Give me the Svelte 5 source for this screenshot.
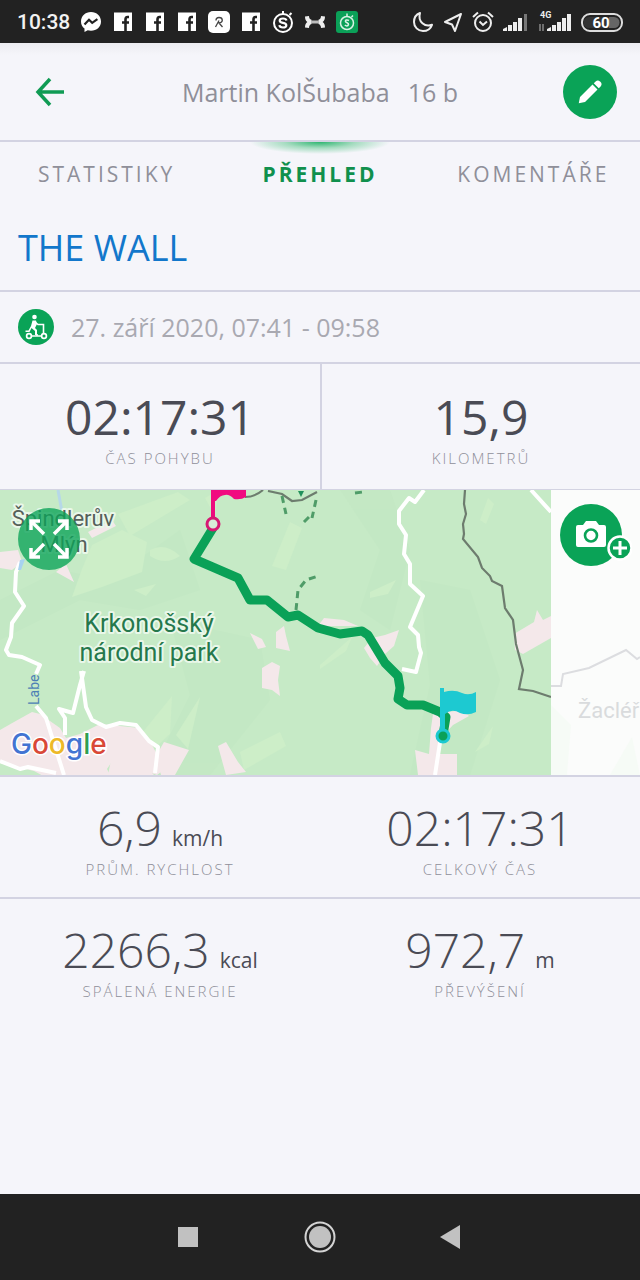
<script>
  const tabs = [
    { label: 'Statistiky', active: false },
    { label: 'Přehled', active: true },
    { label: 'Komentáře', active: false }
  ];
  const primary = [
    { value: '02:17:31', unit: '', label: 'Čas pohybu' },
    { value: '15,9', unit: '', label: 'Kilometrů' }
  ];
  const secondary = [
    [
      { value: '6,9', unit: 'km/h', label: 'Prům. rychlost' },
      { value: '02:17:31', unit: '', label: 'Celkový čas' }
    ],
    [
      { value: '2266,3', unit: 'kcal', label: 'Spálená energie' },
      { value: '972,7', unit: 'm', label: 'Převýšení' }
    ]
  ];
  const notifications = ['messenger', 'fb', 'fb', 'fb', 'relive', 'fb', 'watch', 'ua', 'app'];
</script>

{#snippet stat(item)}
  <div class="stat">
    <dt>{item.label}</dt>
    <dd>{item.value}{#if item.unit}<span class="unit">{item.unit}</span>{/if}</dd>
  </div>
{/snippet}

<div class="screen">
  <div class="status">
    <time>10:38</time>
    <div class="notes">
      {#each notifications as kind}
        <svg viewBox="0 0 22 22" width="22" height="22" aria-hidden="true">
          {#if kind === 'messenger'}
            <path d="M11 1C5.300 1 1 5 1 10.400c0 3 1.300 5.400 3.500 7.100V21l3.200-1.800c1 .3 2.100.5 3.300.5 5.700 0 10-4 10-9.300S16.700 1 11 1z" fill="#fff" />
            <path d="M4.500 13.500l4.500-4.700 3.200 3 5.200-3.600" fill="none" stroke="#222" stroke-width="2.200" />
          {:else if kind === 'fb'}
            <rect x="2" y="1.500" width="18" height="18.500" fill="#fff" />
            <path d="M17 6h-1.500Q13.500 6 13.500 8.500V20M10 11.500H17" fill="none" stroke="#222" stroke-width="2.600" />
          {:else if kind === 'relive'}
            <rect x="0" y="0" width="22" height="22" rx="5" fill="#fff" />
            <path d="M8 9.500C8 7.500 9.500 6.500 11 6.500c2 0 3.300 1.200 3.300 2.800 0 1.700-1.500 2.500-3.300 2.700l3.500 4M11 9.500l-3.500 6.500" fill="none" stroke="#444" stroke-width="1.300" />
          {:else if kind === 'watch'}
            <circle cx="11" cy="12" r="9" fill="none" stroke="#fff" stroke-width="2" />
            <path d="M11 3V0M17.500 4l2-2" stroke="#fff" stroke-width="2" />
            <path d="M14.500 9.500c-.4-1.400-1.600-2-3.500-2s-3.300.7-3.300 2.200c0 3.100 6.600 1.300 6.600 4.500 0 1.600-1.400 2.300-3.400 2.300-2.100 0-3.300-.8-3.500-2.300" fill="none" stroke="#fff" stroke-width="2.200" />
          {:else if kind === 'ua'}
            <path d="M1 5.500l4-.5c0 2 .8 3.200 2.500 3.800V13C5.800 13.600 5 14.800 5 17l-4-.5c0-2.400.7-4.200 2.300-5.500C1.700 9.700 1 7.900 1 5.500zM21 5.500L17 5c0 2-.8 3.200-2.500 3.800V13c1.700.6 2.500 1.800 2.500 4l4-.5c0-2.400-.7-4.200-2.300-5.500 1.600-1.300 2.300-3.100 2.300-5.500z" fill="#eee" />
            <path d="M7 11h8" stroke="#bbb" stroke-width="3" />
          {:else}
            <rect width="22" height="22" rx="3" fill="#0ba058" />
            <circle cx="11" cy="12" r="6.500" fill="none" stroke="#d9f2e5" stroke-width="1.500" />
            <path d="M11 5V2.500M15.500 6l1.500-1.500M13 9.500c-2-1-4-.5-3.500 1s3.500 1 3 3-2.500 1.500-3.700.7" fill="none" stroke="#d9f2e5" stroke-width="1.500" />
          {/if}
        </svg>
      {/each}
    </div>
    <div class="system">
      <svg viewBox="0 0 22 22" width="22" height="22" aria-hidden="true">
        <path d="M8 2C4 3.500 2 7 2 11c0 5 4 9 9 9 4.300 0 7.700-2.500 9-6.200C13 16.500 5.500 11 8 2z" fill="none" stroke="#eee" stroke-width="2" stroke-linejoin="round" />
      </svg>
      <svg viewBox="0 0 20 22" width="20" height="22" aria-hidden="true">
        <path d="M18 3L2 11l7 2.500L12 20z" fill="none" stroke="#eee" stroke-width="2" stroke-linejoin="round" />
      </svg>
      <svg viewBox="0 0 22 22" width="22" height="22" aria-hidden="true">
        <circle cx="11" cy="12" r="8" fill="none" stroke="#eee" stroke-width="2" />
        <path d="M7.500 10.500l3.500 3.500 4-3.500M1 6l5-4.500M21 6l-5-4.500" fill="none" stroke="#eee" stroke-width="2" />
      </svg>
      <svg viewBox="0 0 26 22" width="26" height="22" aria-hidden="true">
        <path d="M0 20v-2l4-2v4zM5 20v-6h4v6zM10 20v-9h4v9zM15 20V7h4v13z" fill="#eee" />
        <path d="M21 20V3h3v17z" fill="#777" />
      </svg>
      <svg viewBox="0 0 34 22" width="34" height="22" aria-hidden="true">
        <text x="2" y="7" class="net">4G</text>
        <path d="M9 20v-2l4-2v4zM14 20v-6h4v6zM19 20v-9h4v9zM24 20V7h4v13zM29 20V3h4v17z" fill="#eee" />
        <path d="M2 20v-7M5 13v7" stroke="#888" stroke-width="1.500" />
      </svg>
      <svg viewBox="0 0 42 22" width="42" height="22" aria-hidden="true">
        <rect x="1" y="3" width="40" height="17" rx="8" fill="none" stroke="#ddd" stroke-width="2" />
        <path d="M8 6h20v11H8a5 5 0 0 1 0-11z" fill="#333" />
        <path d="M28 6h5a5.500 5.500 0 0 1 0 11h-5z" fill="#666" />
        <text x="20" y="17" text-anchor="middle" class="charge">60</text>
      </svg>
    </div>
  </div>

  <header>
    <button class="back" aria-label="Zpět">
      <svg viewBox="0 0 30 36" width="30" height="36" aria-hidden="true">
        <path d="M16 5L4 18l12 13M4 18h26" fill="none" stroke="#109b54" stroke-width="3.500" />
      </svg>
    </button>
    <h1>Martin KolŠubaba<span>16 b</span></h1>
    <button class="edit" aria-label="Upravit">
      <svg viewBox="0 0 24 24" width="30" height="30" aria-hidden="true">
        <path d="M3 21l1-5L14 6l4 4L8 20zM15 5l1.500-1.500c1-1 2.500-1 3.500 0l.5.5c1 1 1 2.500 0 3.500L19 9z" fill="#fff" />
      </svg>
    </button>
  </header>

  <nav class="tabs">
    {#each tabs as tab}
      <a href="#{tab.label}" class:active={tab.active}>{tab.label}</a>
    {/each}
  </nav>

  <main>
    <h2>THE WALL</h2>
    <div class="when">
      <svg viewBox="0 0 36 36" width="36" height="36" aria-hidden="true">
        <circle cx="18" cy="18" r="18" fill="#0aa357" />
        <circle cx="16.500" cy="8" r="2.300" fill="#fff" />
        <path d="M14.500 11.500h3.500l1 3.500-2 4 2 2v5h-2v-4l-3.500-3-2 4H7.500v-1.500h3L13 17z" fill="#fff" />
        <path d="M17 13l3 2.500h5.500V25M14 27h9M19 25v2" fill="none" stroke="#fff" stroke-width="1.600" />
        <circle cx="11" cy="27" r="2.400" fill="none" stroke="#fff" stroke-width="1.700" />
        <circle cx="26" cy="27" r="2.400" fill="none" stroke="#fff" stroke-width="1.700" />
      </svg>
      <span>27. září 2020, 07:41 - 09:58</span>
    </div>

    <dl class="row primary">
      {#each primary as item}{@render stat(item)}{/each}
    </dl>

    <section class="map" aria-label="Mapa trasy">
      <svg class="canvas" viewBox="0 0 640 285" preserveAspectRatio="xMidYMid slice">
        <rect width="640" height="285" fill="#c6eac6" />
        <g fill="#bfe6c1" opacity=".35">
          <path d="M0 110l60-30 50 10 70-50 20 60-60 20-60-10-80 40z" />
          <path d="M340 0h50l20 60-20 80-30-20 20-60z" />
          <path d="M420 90l50 10 30 90-30 95h-60l20-90z" />
          <path d="M170 130l90 20 10 60-60 75h-60l40-80z" />
        </g>
        <g fill="#cdeec8">
          <path d="M92 55l30-15 25 12-5 30-40 15-30 10 10-28z" />
          <path d="M150 60q15-8 30 6-15 10-30 0z" />
          <path d="M118 24l60-22 12 8-60 36z" />
          <path d="M272 76l18-44 12 6-16 42z" />
          <path d="M134 100l22-6-10 12z" />
          <path d="M138 248l34-42-2 38-36 34z" />
          <path d="M176 245l24-38-12 52z" />
          <path d="M480 30l8-22 6 6-8 20z" />
          <path d="M370 102l26-12-8 14-18 4z" />
          <path d="M320 175l32-28-6 14-26 18z" />
          <path d="M475 262l18-26-4 18z" />
          <path d="M240 262l40-20 6 14-42 24z" />
          <path d="M205 8l14-8-4 26z" />
        </g>
        <g fill="#f4e8ea">
          <path d="M0 62l18-2 4 12-10 8-12-2z" />
          <path d="M88 42l24-12 4 6-24 12zM56 82l18 10-8-18z" />
          <path d="M0 240l14-8 18-10 8 2 20 14 6 10 14-4 20-10 40 4 12 17 13 24-8 6-18-6-12-10-12-2-8 12 8 16H60l-26-14-34-8z" />
          <path d="M108 285l4-20 14-4 14 10 14 14z" />
          <path d="M156 266l8-14 25 8-14 25h-14zM218 256l8-4 12 20 8 10-20 3z" />
          <path d="M250 143l12 6 4 8-8 2zM276 142l8-6 2 10 4 15-14-3zM262 178l10-6 8 4-2 14 2 16-8-6-10-2z" />
          <path d="M338 136h-20l6-8 20 2 14 6zM364 158l8-10 13-3 14-5-5 16-9 8-8 12-7-8z" />
          <path d="M514 144l20-12 3-12 6 10 8-4v22l-28 16-8-4z" />
          <path d="M433 224l30-4 6 6-16 9-14 15-2 14 20 0v21h-39l-3-25 14 4 2-26z" />
        </g>
        <g fill="none" stroke="#fff" stroke-width="4" stroke-linejoin="round">
          <path d="M20 72l-4 10-1 20 9 14-12 17-1 14-5 13 3 5 13 2 18 8-4 9M36 216l10 12 18 57M0 271l20 8 8-2 28 6" />
          <path d="M84 181l-4 14-4 16-3 12-14-4 6 9v17M81 181l5 36 6 13 14 7 14-4 16 2 13 16 9 6-3 26" />
          <path d="M424 0l-9 12-6-4-10 13 0 13 7 11-2 19 6 10v20l13 12-13 31 8 8 1 12 2 6-5 19-14-3" />
          <path d="M531 0l20 22M441 246l-6 39" />
        </g>
        <path d="M18 80l2-10 5-1-4 11z" fill="#a8d2ef" />
        <path d="M58 0l4 22" stroke="#b6d8e8" stroke-width="3" />
        <g fill="none" stroke="#6d7c6e" stroke-width="2.200">
          <path d="M245 7q10 0 18-7M268 1l14 3 10 7 10-1 15-8" />
          <path d="M465 0l-1 14 2 10-3 10 1 10-1 5 15 18 4 11 8 8 2 5 10 5 3 22 8 12 3 24 7 26-4 19 14 2 18 6" />
        </g>
        <g fill="none" stroke="#4f9c68" stroke-width="3" stroke-dasharray="7 5">
          <path d="M296 120l2-20 8-10 12-4M282 6l4 18M316 10l-4 18M304 32l8-8M355 3l8-1" />
        </g>
        <path d="M298 1h6l-3 6z" fill="#22915b" />

        <rect x="551" width="89" height="285" fill="#fbfcfb" />
        <path d="M610 285l22-38 8 38zM551 215l20 20-4 50h-16z" fill="#f6fbf6" />
        <path d="M551 196h10l2-12 26-6 37-18 11 9 3-2" fill="none" stroke="#dcdde0" stroke-width="2" />

        <g class="label town">
          <text x="63" y="36" text-anchor="middle">Špindlerův</text>
          <text x="64" y="62" text-anchor="middle">Mlýn</text>
        </g>
        <g class="label park">
          <text x="149" y="142" text-anchor="middle">Krkonošský</text>
          <text x="149" y="171" text-anchor="middle">národní park</text>
        </g>
        <text class="river" transform="translate(39 215) rotate(-90)">Labe</text>
        <text class="faded" x="578" y="228">Žacléř</text>
        <text class="google" x="11" y="264"><tspan fill="#4274d2">G</tspan><tspan fill="#d94837">o</tspan><tspan fill="#edb928">o</tspan><tspan fill="#4274d2">g</tspan><tspan fill="#2f9f51">l</tspan><tspan fill="#d94837">e</tspan></text>

        <path d="M213 38l-19 31 44 19 12 22h17l21 17 10-2 20 13 22 6 22-3 6 4 17 28 13 13 2 12-2 11 9 6h16l17 7 6 5-3 18" fill="none" stroke="#0aa157" stroke-width="9" stroke-linejoin="round" />
        <path d="M213 28V0" stroke="#ed0b7e" stroke-width="4" />
        <path d="M211 0h35v7q-5 3-12 2-5-5-9-4-5 0-9 6h-5z" fill="#f10a80" />
        <circle cx="213" cy="34" r="6" fill="#d8edd8" stroke="#d61973" stroke-width="3" />
        <path d="M440 198h4v4q10-3 18 1 7 3 14-1v20q-8 4-16 1-8-5-15 1v20h-5z" fill="#1dc9d1" />
        <circle cx="443" cy="246" r="6" fill="#0aa157" stroke="#1dc9d1" stroke-width="3" />
      </svg>
      <button class="expand" aria-label="Zvětšit mapu">
        <svg viewBox="0 0 40 40" width="40" height="40" aria-hidden="true">
          <path d="M15 15L3 3M25 15L37 3M15 25L3 37M25 25l12 12M2 11V2h9M29 2h9v9M2 29v9h9M29 38h9v-9" fill="none" stroke="#fff" stroke-width="3.500" />
        </svg>
      </button>
      <button class="photo" aria-label="Přidat fotku">
        <svg viewBox="0 0 72 62" width="72" height="62" aria-hidden="true">
          <circle cx="31" cy="31" r="31" fill="#0aa357" />
          <path d="M18 21h5l3-4h10l3 4h5q2 0 2 2v18q0 2-2 2H18q-2 0-2-2V23q0-2 2-2z" fill="#fff" />
          <circle cx="31" cy="31.500" r="6" fill="#fff" stroke="#0aa357" stroke-width="2.600" />
          <circle cx="60" cy="44" r="11.500" fill="#0aa357" stroke="#fff" stroke-width="2.500" />
          <path d="M60 37v14M53 44h14" stroke="#fff" stroke-width="3" />
        </svg>
      </button>
    </section>

    {#each secondary as row}
      <dl class="row light">
        {#each row as item}{@render stat(item)}{/each}
      </dl>
    {/each}
  </main>

  <nav class="system-nav" aria-label="Systém">
    <button aria-label="Poslední aplikace">
      <svg viewBox="0 0 32 32" width="32" height="32"><rect x="6" y="6" width="20" height="20" fill="#c1c1c1" /></svg>
    </button>
    <button aria-label="Domů">
      <svg viewBox="0 0 32 32" width="32" height="32"><circle cx="16" cy="16" r="14.500" fill="none" stroke="#d4d4d4" stroke-width="2" /><circle cx="16" cy="16" r="11" fill="#c1c1c1" /></svg>
    </button>
    <button aria-label="Zpět">
      <svg viewBox="0 0 32 32" width="32" height="32"><path d="M4 16L24 4v24z" fill="#c1c1c1" /></svg>
    </button>
  </nav>
</div>

<style>
  :global(body) {
    margin: 0;
    background: #f5f5fa;
  }
  .screen {
    display: flex;
    flex-direction: column;
    min-height: 100vh;
    background: #f5f5fa;
    font-family: 'Open Sans', sans-serif;
    color: #4a4b55;
  }
  svg {
    display: block;
    flex: none;
  }
  button {
    padding: 0;
    border: 0;
    background: none;
    cursor: pointer;
  }
  h1, h2, dl, dd, dt {
    margin: 0;
    font-weight: 400;
  }

  .status {
    display: flex;
    align-items: center;
    height: 43px;
    padding: 0 17px;
    box-sizing: border-box;
    background: #222;
    color: #f2f2f2;
    font: 500 21px Roboto, sans-serif;
  }
  .status time {
    width: 63px;
  }
  .notes {
    display: flex;
    gap: 10px;
  }
  .system {
    display: flex;
    gap: 9px;
    margin-left: auto;
  }
  .net {
    font: 700 9px Roboto, sans-serif;
    fill: #eee;
  }
  .charge {
    font: 700 15px Roboto, sans-serif;
    fill: #fff;
  }

  header {
    display: grid;
    grid-template-columns: 54px 1fr 54px;
    align-items: center;
    height: 99px;
    padding: 0 23px 0 34px;
    box-sizing: border-box;
    border-bottom: 2px solid #d3d3e2;
    background: linear-gradient(#ececf0, #f5f5fa 12px);
  }
  h1 {
    padding-right: 11px;
    text-align: center;
    font-size: 25px;
    color: #8f8f99;
  }
  h1 span {
    margin-left: 18px;
  }
  .edit {
    display: grid;
    place-items: center;
    width: 54px;
    height: 54px;
    border-radius: 50%;
    background: #0aa357;
  }

  .tabs {
    display: grid;
    grid-template-columns: repeat(3, 1fr);
    height: 64px;
    background: radial-gradient(ellipse 70px 12px at 50% 0, #2fb670, #a5dcc0 50%, #f5f5fa);
  }
  .tabs a {
    display: grid;
    place-items: center;
    color: #8f8f99;
    font-size: 21px;
    letter-spacing: 3px;
    text-decoration: none;
    text-transform: uppercase;
  }
  .tabs .active {
    color: #10904d;
    font-weight: 700;
  }

  main {
    flex: 1;
  }
  h2 {
    padding: 0 18px;
    border-bottom: 2px solid #d3d3e2;
    font-size: 36px;
    line-height: 84px;
    color: #1277cb;
  }
  .when {
    display: flex;
    align-items: center;
    gap: 17px;
    height: 70px;
    padding: 0 18px;
    border-bottom: 2px solid #d3d3e2;
    font-size: 25px;
    color: #a9a9b1;
  }

  .row {
    display: grid;
    grid-template-columns: 1fr 1fr;
  }
  .stat {
    display: flex;
    flex-direction: column-reverse;
    align-items: center;
    padding: 21px 0 22px;
  }
  .primary .stat + .stat {
    border-left: 2px solid #d3d3e2;
  }
  dd {
    font-size: 48px;
    line-height: 64px;
  }
  dt {
    font-size: 15px;
    font-weight: 300;
    line-height: 18px;
    letter-spacing: 2px;
    text-transform: uppercase;
    color: #8f8f99;
  }
  .light {
    border-top: 2px solid #d3d3e2;
  }
  .light .stat {
    padding: 19px 0;
  }
  .light dd {
    font-weight: 300;
  }
  .unit {
    margin-left: 10px;
    font-size: 21px;
    font-weight: 400;
    line-height: 1;
  }

  .map {
    position: relative;
    border-top: 1px solid #d3d3e2;
  }
  .canvas {
    width: 100%;
    height: 285px;
  }
  .label {
    paint-order: stroke;
    stroke: #e9f7e9;
    stroke-width: 4px;
    stroke-linejoin: round;
    font-family: Roboto, sans-serif;
  }
  .town {
    font-size: 22px;
    fill: #55605a;
  }
  .park {
    font-size: 25px;
    fill: #25784c;
  }
  .river {
    font: 14px Roboto, sans-serif;
    fill: #4d7fb5;
  }
  .faded {
    font: 22px Roboto, sans-serif;
    fill: #d9dbdd;
  }
  .google {
    paint-order: stroke;
    stroke: #fff;
    stroke-width: 3px;
    font: 500 28px Inter, sans-serif;
  }
  .expand {
    position: absolute;
    top: 18px;
    left: 18px;
    display: grid;
    place-items: center;
    width: 62px;
    height: 62px;
    border-radius: 50%;
    background: rgba(10, 163, 87, 0.78);
  }
  .photo {
    position: absolute;
    top: 14px;
    right: 8px;
  }

  .system-nav {
    display: flex;
    justify-content: center;
    align-items: center;
    gap: 100px;
    height: 86px;
    background: #222;
  }
</style>
